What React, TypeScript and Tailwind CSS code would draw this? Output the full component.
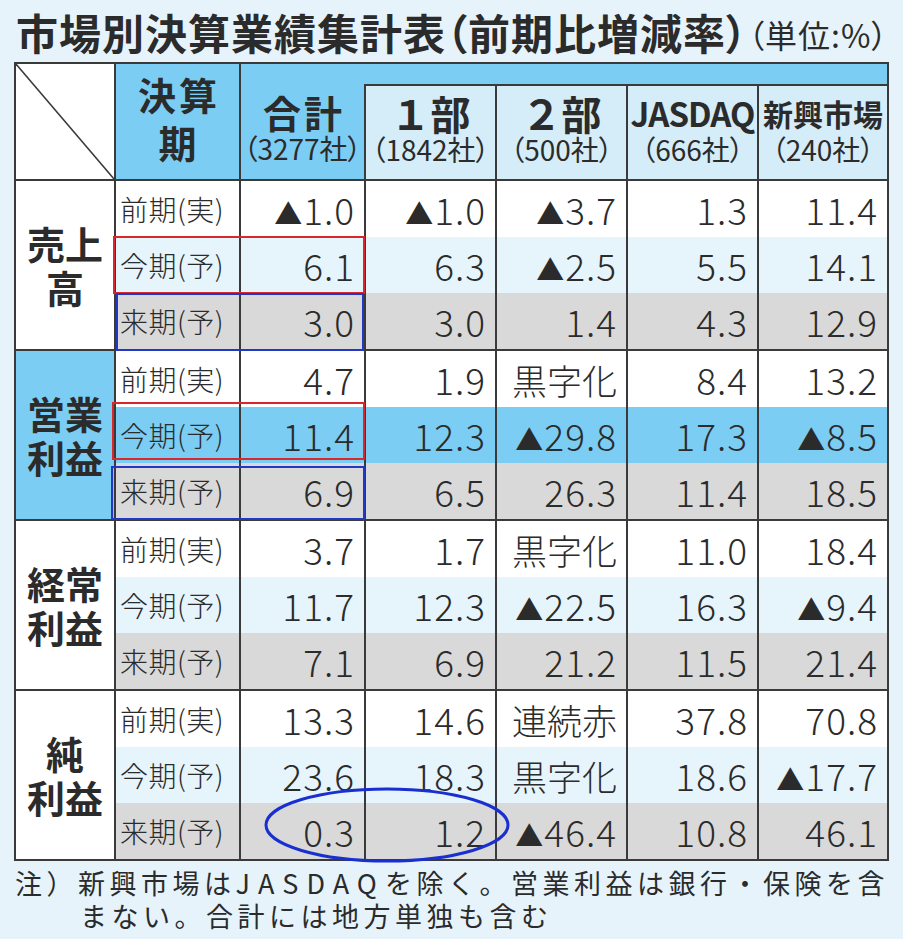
import React from "react";

type Group = { name: string[]; hi?: boolean; rows: string[][] };

const groups: Group[] = [
  {
    name: ["売上", "高"],
    rows: [
      ["▲1.0", "▲1.0", "▲3.7", "1.3", "11.4"],
      ["6.1", "6.3", "▲2.5", "5.5", "14.1"],
      ["3.0", "3.0", "1.4", "4.3", "12.9"],
    ],
  },
  {
    name: ["営業", "利益"],
    hi: true,
    rows: [
      ["4.7", "1.9", "黒字化", "8.4", "13.2"],
      ["11.4", "12.3", "▲29.8", "17.3", "▲8.5"],
      ["6.9", "6.5", "26.3", "11.4", "18.5"],
    ],
  },
  {
    name: ["経常", "利益"],
    rows: [
      ["3.7", "1.7", "黒字化", "11.0", "18.4"],
      ["11.7", "12.3", "▲22.5", "16.3", "▲9.4"],
      ["7.1", "6.9", "21.2", "11.5", "21.4"],
    ],
  },
  {
    name: ["純", "利益"],
    rows: [
      ["13.3", "14.6", "連続赤", "37.8", "70.8"],
      ["23.6", "18.3", "黒字化", "18.6", "▲17.7"],
      ["0.3", "1.2", "▲46.4", "10.8", "46.1"],
    ],
  },
];

const periods = [
  ["前期", "実"],
  ["今期", "予"],
  ["来期", "予"],
];

const widths = ["w-[125px]", "w-[131px]", "w-[131px]", "w-[131px]", "w-[130px]"];

function Value({ v }: { v: string }) {
  if (v.startsWith("▲")) {
    return (
      <span className="inline-flex items-baseline">
        <span className="text-[28px] leading-none mr-[1px]">▲</span>
        <span className="text-[37px] font-light tracking-[1px]">{v.slice(1)}</span>
      </span>
    );
  }
  if (/^[0-9.]+$/.test(v))
    return <span className="text-[37px] font-light tracking-[1px]">{v}</span>;
  return <span className="text-[35px] font-light">{v}</span>;
}

function Paren({ children }: { children: React.ReactNode }) {
  return <span className="[font-feature-settings:'palt']">{children}</span>;
}

export default function App() {
  return (
    <div className="w-[903px] h-[939px] bg-[#e6f3fb] text-[#2b2b2b] font-['Noto_Sans_CJK_JP','Noto_Sans',sans-serif] overflow-hidden">
      {/* Title */}
      <div className="h-[62px] flex items-center pl-[16px] pt-[2px] whitespace-nowrap">
        <span className="text-[42px] font-bold leading-none tracking-[1px]">
          市場別決算業績集計表<Paren>（</Paren>前期比増減率<Paren>）</Paren>
        </span>
        <span className="text-[32px] leading-none mt-[4px] tracking-[1px]">
          <Paren>（</Paren>単位:%<Paren>）</Paren>
        </span>
      </div>

      {/* Table */}
      <div className="relative ml-[14px] w-[875px]">
        <div className="border-2 border-[#3a3a3a]">
          {/* Header */}
          <div className="flex h-[117px] border-b-2 border-[#3a3a3a]">
            <div className="w-[98px] bg-white relative">
              <svg className="absolute inset-0 w-full h-full" viewBox="0 0 98 115" preserveAspectRatio="none">
                <line x1="0" y1="0" x2="98" y2="115" stroke="#3a3a3a" strokeWidth="1.5" />
              </svg>
            </div>
            <div className="w-[125px] border-l-2 border-[#3a3a3a] bg-[#7ccdf3] flex flex-col items-center justify-center font-bold text-[38px] leading-[48px] tracking-[3px] pl-[3px] pb-[8px]">
              <span>決算</span>
              <span>期</span>
            </div>
            <div className="flex-1 flex flex-col">
              <div className="h-[20px] bg-[#7ccdf3] border-l-2 border-[#3a3a3a]" />
              <div className="flex flex-1">
                <div className="w-[125px] bg-[#7ccdf3] border-l-2 border-[#3a3a3a] flex flex-col items-center justify-center pb-[8px]">
                  <span className="text-[38px] font-bold leading-[40px] tracking-[3px] pl-[3px]">合計</span>
                  <span className="text-[28px] leading-[32px] whitespace-nowrap">
                    <Paren>（</Paren>3277社<Paren>）</Paren>
                  </span>
                </div>
                {[
                  ["１部", "1842社"],
                  ["２部", "500社"],
                  ["JASDAQ", "666社"],
                  ["新興市場", "240社"],
                ].map(([h, c], i) => (
                  <div
                    key={h}
                    className={`${widths[i + 1]} bg-[#d5ecf9] border-l-2 border-t-2 border-[#3a3a3a] flex flex-col items-center justify-center pb-[8px]`}
                  >
                    <span
                      className={
                        h === "JASDAQ"
                          ? "text-[33px] font-bold leading-[40px] tracking-[-1px] whitespace-nowrap"
                          : h === "新興市場"
                          ? "text-[30px] font-bold leading-[40px] whitespace-nowrap"
                          : "text-[40px] font-bold leading-[40px] whitespace-nowrap"
                      }
                    >
                      {h}
                    </span>
                    <span className="text-[28px] leading-[32px] whitespace-nowrap">
                      <Paren>（</Paren>
                      {c}
                      <Paren>）</Paren>
                    </span>
                  </div>
                ))}
              </div>
            </div>
          </div>

          {/* Body */}
          {groups.map((g, gi) => (
            <div
              key={gi}
              className={`flex ${gi < groups.length - 1 ? "border-b-2 border-[#3a3a3a]" : ""}`}
            >
              <div
                className={`w-[98px] flex flex-col items-center justify-center font-bold text-[38px] leading-[44px] ${
                  g.hi ? "bg-[#7ccdf3]" : "bg-white"
                }`}
              >
                {g.name.map((n) => (
                  <span key={n}>{n}</span>
                ))}
              </div>
              <div className="flex flex-col">
                {g.rows.map((r, ri) => {
                  const bg =
                    ri === 0
                      ? "bg-white"
                      : ri === 1
                      ? g.hi
                        ? "bg-[#7ccdf3]"
                        : "bg-[#e6f4fc]"
                      : "bg-[#d9d9d9]";
                  return (
                    <div key={ri} className={`flex h-[56px] ${bg}`}>
                      <div className="w-[125px] border-l-2 border-[#3a3a3a] flex items-center pl-[4px] text-[28px] font-light leading-none whitespace-nowrap tracking-[0.5px]">
                        {periods[ri][0]}({periods[ri][1]})
                      </div>
                      {r.map((v, vi) => (
                        <div
                          key={vi}
                          className={`${widths[vi]} border-l-2 border-[#3a3a3a] flex items-center justify-end pr-[9px] leading-none whitespace-nowrap`}
                        >
                          <Value v={v} />
                        </div>
                      ))}
                    </div>
                  );
                })}
              </div>
            </div>
          ))}
        </div>

        {/* Annotations */}
        <div className="absolute left-[99px] top-[174px] w-[252px] h-[58px] border-2 border-[#d8282c]" />
        <div className="absolute left-[102px] top-[231px] w-[248px] h-[58px] border-2 border-[#2238c4]" />
        <div className="absolute left-[98px] top-[340px] w-[253px] h-[58px] border-2 border-[#d8282c]" />
        <div className="absolute left-[97px] top-[404px] w-[254px] h-[54px] border-2 border-[#2238c4]" />
        <svg className="absolute left-[250px] top-[725px] w-[246px] h-[76px]" viewBox="0 0 246 76">
          <ellipse cx="123" cy="38" rx="121" ry="36" fill="none" stroke="#1a2fd0" strokeWidth="3" />
        </svg>
      </div>

      {/* Footer note */}
      <div className="pt-[5px] text-[27px] leading-[33px] tracking-[4.5px] whitespace-nowrap">
        <div className="pl-[15px]">
          注）新興市場は<span className="tracking-[8px]">JASDAQ</span>を除く。営業利益は銀行・保険を含
        </div>
        <div className="pl-[80px]">まない。合計には地方単独も含む</div>
      </div>
    </div>
  );
}
